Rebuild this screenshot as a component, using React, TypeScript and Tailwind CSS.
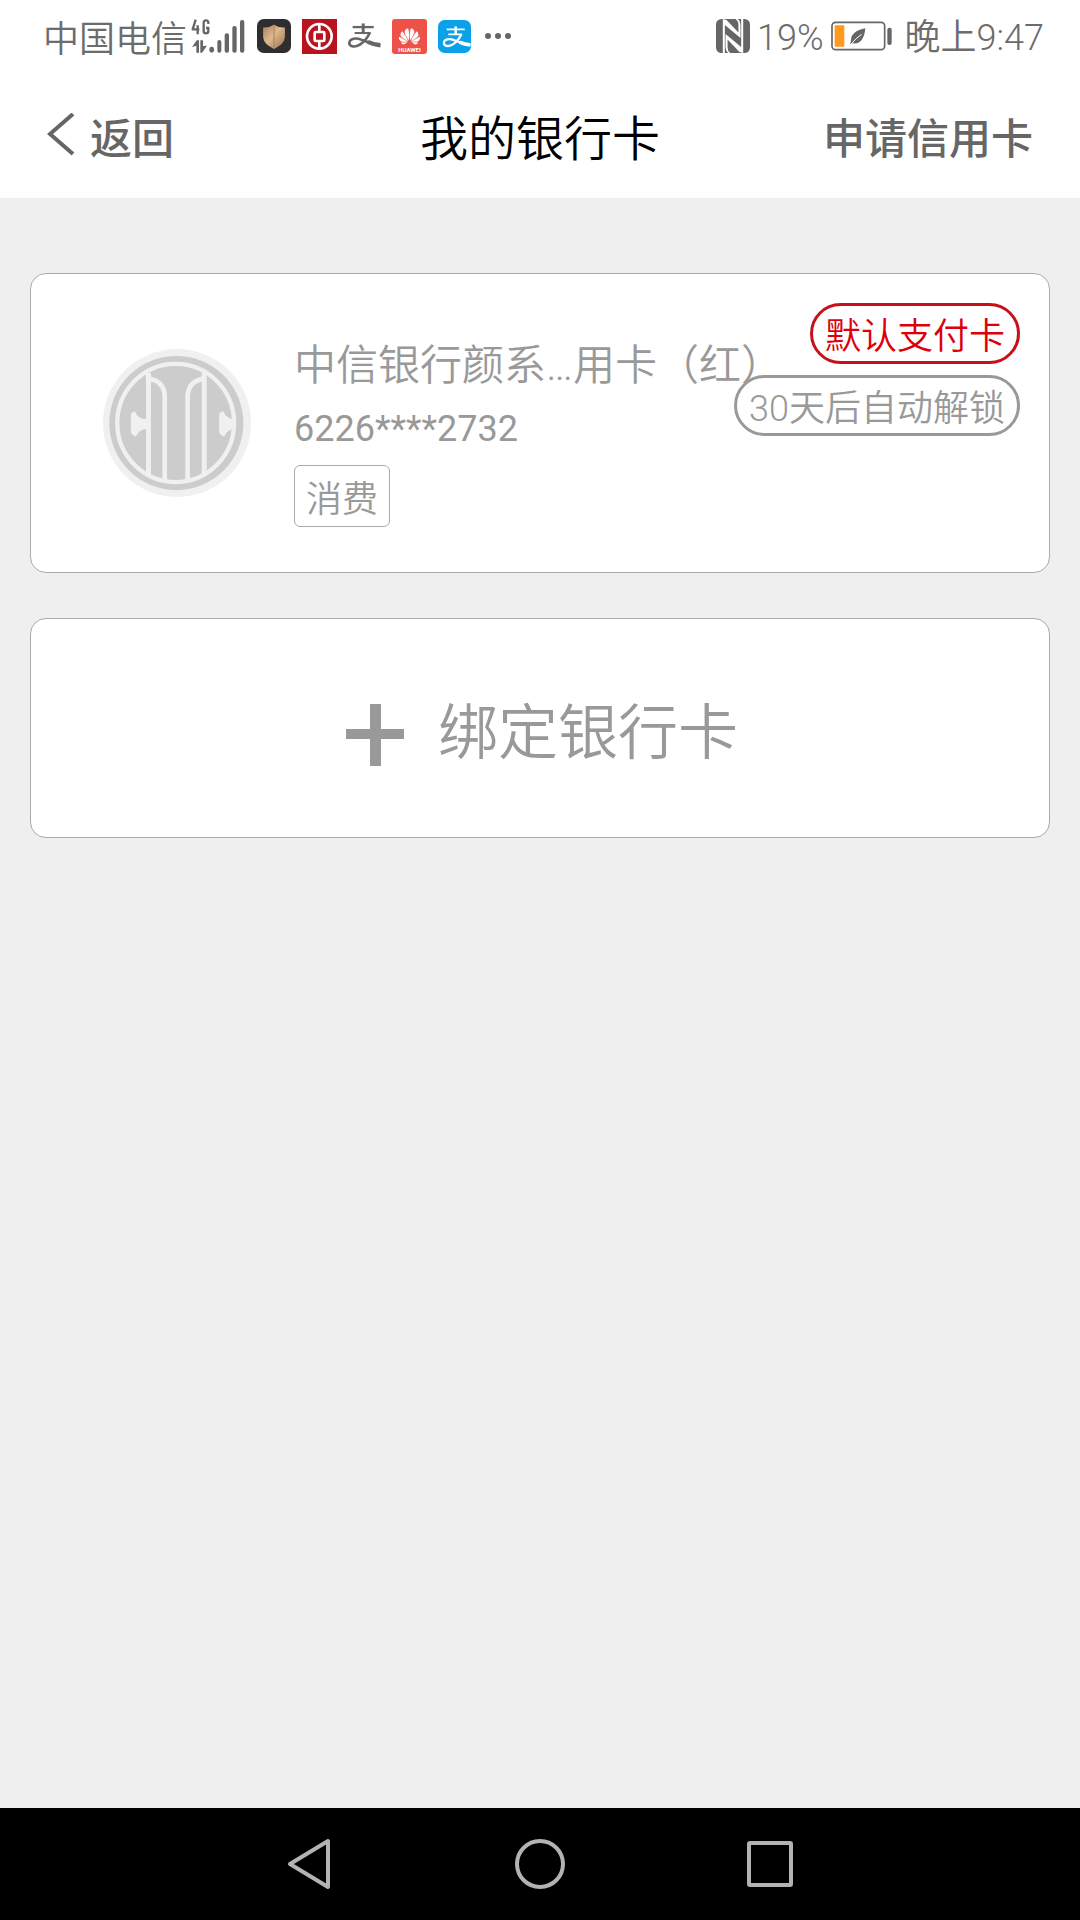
import React from "react";
import { SiHuawei } from "react-icons/si";

function SignalIcon() {
  return (
    <svg className="h-[36px] w-[54px]" viewBox="0 0 162 108" fill="#666">
      <g fill="none" stroke="#666" strokeWidth="7" strokeLinejoin="round">
        <path d="M14 5 5 34H25M20 22V49" />
        <path d="M52 18V14Q52 7 45 7T38 14V39Q38 46 45 46T52 39V30H45" />
      </g>
      <path d="M3 88 17 67H24V104H16V83ZM28 67H36V84L48 83 33 104H28Z" />
      <rect x="55" y="86" width="14" height="18" rx="7" />
      <rect x="79" y="66" width="12" height="38" rx="6" />
      <rect x="101" y="46" width="13" height="58" rx="6" />
      <rect x="124" y="24" width="13" height="80" rx="6" />
      <rect x="147" y="6" width="13" height="98" rx="6" />
    </svg>
  );
}

function ShieldIcon() {
  return (
    <svg className="size-[34px]" viewBox="0 0 100 100">
      <defs>
        <linearGradient id="bronze" x1="0" y1="0" x2="1" y2="1">
          <stop offset="0" stopColor="#a87f5b" />
          <stop offset=".45" stopColor="#deb88e" />
          <stop offset="1" stopColor="#98714f" />
        </linearGradient>
      </defs>
      <rect width="100" height="100" rx="20" fill="#302d31" />
      <path d="M50 17Q66 27 82 25V54Q80 75 50 88 20 75 18 54V25Q34 27 50 17Z" fill="url(#bronze)" />
      <path d="M50 17V88" stroke="#a98360" strokeWidth="3" />
    </svg>
  );
}

function BankOfChinaIcon() {
  return (
    <svg className="size-[35px]" viewBox="0 0 105 105" fill="none" stroke="#fff">
      <rect width="105" height="105" fill="#b9131f" stroke="none" />
      <circle cx="52" cy="52" r="37" strokeWidth="8" />
      <rect x="38" y="39" width="29" height="27" rx="3" strokeWidth="8" />
      <path d="M52 15V37M52 68V90" strokeWidth="8" />
    </svg>
  );
}

function ZhiGlyph() {
  return (
    <g fill="none" stroke="currentColor" strokeLinecap="butt">
      <path d="M14 11H78" strokeWidth="7" />
      <path d="M46 0V30" strokeWidth="9" />
      <path d="M20 29H69" strokeWidth="6" />
      <path d="M66 28Q55 52 36 64C18 75 3 69 4 58 6 45 24 43 40 49 58 55 74 64 98 67" strokeWidth="8" />
      <path d="M60 56Q76 64 98 66" strokeWidth="13" />
    </g>
  );
}

function AlipayGlyphIcon() {
  return (
    <svg className="h-[26px] w-[33px] text-[#666]" viewBox="0 0 100 76">
      <ZhiGlyph />
    </svg>
  );
}

function HuaweiIcon() {
  return (
    <span className="flex size-[35px] flex-col items-center rounded-[3px] bg-[#ed5248] pt-[7px] text-white">
      <SiHuawei className="size-[21px]" />
      <span className="font-['Roboto'] text-[6px] leading-[6px] font-bold">HUAWEI</span>
    </span>
  );
}

function AlipayAppIcon() {
  return (
    <svg className="size-[33px] text-white" viewBox="0 0 100 100">
      <rect width="100" height="100" rx="20" fill="#0aa1e8" />
      <svg x="14" y="19" width="86" height="65" viewBox="0 0 100 76">
        <ZhiGlyph />
      </svg>
    </svg>
  );
}

function DotsIcon() {
  return (
    <svg className="h-[6px] w-[26px]" viewBox="0 0 26 6" fill="#666">
      <circle cx="3" cy="3" r="3" />
      <circle cx="13" cy="3" r="3" />
      <circle cx="23" cy="3" r="3" />
    </svg>
  );
}

function NfcIcon() {
  return (
    <svg className="size-[34px]" viewBox="0 0 100 100">
      <rect width="100" height="100" rx="16" fill="#666" />
      <path
        d="M20 0 31 3 66 40V18Q66 6 58 0H64Q72 6 72 20V56L26 18V100H20Z M80 100 69 97 34 60V82Q34 94 42 100H36Q28 94 28 80V44L74 82V0H80Z"
        fill="#fff"
      />
    </svg>
  );
}

function BatteryIcon() {
  return (
    <svg className="h-[30px] w-[62px]" viewBox="0 0 186 90">
      <rect x="3" y="4" width="158" height="82" rx="11" fill="none" stroke="#666" strokeWidth="5" />
      <rect x="11" y="13" width="29" height="64" rx="3" fill="#ff9a1f" />
      <path d="M103 22Q62 30 60 56L58 70 65 67Q98 72 103 22Z" fill="#666" />
      <path d="M60 70Q72 53 92 40" stroke="#fff" strokeWidth="3" fill="none" />
      <rect x="169" y="20" width="13" height="52" rx="6" fill="#666" />
    </svg>
  );
}

function CiticLogo() {
  return (
    <svg className="size-[148px] shrink-0" viewBox="40 40 446 446">
      <circle cx="263" cy="263" r="223" fill="#f0f0f0" />
      <circle cx="261" cy="263" r="202" fill="#ccc" />
      <g fill="none" stroke="#f0f0f0">
        <ellipse cx="259" cy="263" rx="176" ry="178" strokeWidth="13" />
        <path d="M177 112V418M345 112V418" strokeWidth="15" />
        <path d="M183 130Q226 140 226 185V438M339 130Q295 140 295 185V438" strokeWidth="14" />
      </g>
      <path d="M124 240Q124 228 137 228 143 250 172 252V280Q148 282 139 304 127 300 124 290ZM390 240Q390 228 403 228 411 250 438 252V280Q414 282 405 304 393 300 390 290Z" fill="#f0f0f0" />
    </svg>
  );
}

function Latin({ children }: { children: React.ReactNode }) {
  return <span className="font-['Roboto',sans-serif] leading-none">{children}</span>;
}

function StatusBar() {
  return (
    <div className="flex h-[72px] items-center justify-between pr-[36px] pl-[43px] text-[36px] leading-none font-[350] text-[#6c6c6c]">
      <div className="flex items-center">
        <span>中国电信</span>
        <span className="mr-[12px] ml-[4px]">
          <SignalIcon />
        </span>
        <div className="flex items-center gap-[11px]">
          <ShieldIcon />
          <BankOfChinaIcon />
          <AlipayGlyphIcon />
          <HuaweiIcon />
          <AlipayAppIcon />
        </div>
        <span className="ml-[14px]">
          <DotsIcon />
        </span>
      </div>
      <div className="flex items-center gap-[7px]">
        <NfcIcon />
        <span>
          <Latin>19%</Latin>
        </span>
        <BatteryIcon />
        <span className="ml-[5px]">
          晚上<Latin>9:47</Latin>
        </span>
      </div>
    </div>
  );
}

function Header() {
  return (
    <header className="grid h-[126px] grid-cols-[1fr_auto_1fr] items-center px-[47px] text-[#666]">
      <button type="button" className="flex items-center gap-[15px] text-[42px] font-medium">
        <svg className="h-[44px] w-[28px]" viewBox="0 0 28 44" fill="none" stroke="currentColor" strokeWidth="4">
          <path d="M26 1 3 21 26 41" />
        </svg>
        返回
      </button>
      <h1 className="text-[48px] font-[350] text-black">我的银行卡</h1>
      <a href="#apply" className="justify-self-end text-[42px] font-medium">
        申请信用卡
      </a>
    </header>
  );
}

function BankCard() {
  return (
    <article className="relative flex h-[300px] items-center rounded-2xl border border-[#aaa] bg-white pl-[72px] font-[350] text-[#999]">
      <CiticLogo />
      <div className="ml-[43px] flex flex-col items-start pt-3">
        <h2 className="text-[42px] leading-[62px]">
          中信银行颜系<Latin>…</Latin>用卡（红）
        </h2>
        <p className="font-['Roboto',sans-serif] text-[36px] leading-[72px] font-normal">6226****2732</p>
        <span className="rounded-md border border-[#aaa] px-[11px] text-[36px] leading-[60px]">消费</span>
      </div>
      <div className="absolute top-[29px] right-[29px] flex flex-col items-end gap-[11px] text-[36px] leading-[55px]">
        <span className="rounded-full border-3 border-[#c8101a] px-[12px] text-[#dc0008]">默认支付卡</span>
        <span className="rounded-full border-3 border-[#999] px-[12px]">
          <Latin>30</Latin>天后自动解锁
        </span>
      </div>
    </article>
  );
}

function BindCardButton() {
  return (
    <button
      type="button"
      className="flex h-[220px] w-full items-center justify-center gap-[34px] rounded-2xl border border-[#aaa] bg-white pl-1 text-[60px] font-[350] text-[#999]"
    >
      <svg className="mt-[14px] h-[62px] w-[58px]" viewBox="0 0 58 62" fill="currentColor">
        <path d="M24 0H35V25H58V35H35V62H24V35H0V25H24Z" />
      </svg>
      绑定银行卡
    </button>
  );
}

function NavBar() {
  return (
    <nav className="flex h-[112px] justify-center bg-black">
      <button type="button" aria-label="返回上一页" className="grid w-[230px] place-items-center">
        <svg className="h-[52px] w-[46px]" viewBox="0 0 46 52" fill="none" stroke="#b3b3b3" strokeWidth="4" strokeLinejoin="round">
          <path d="M41 3V49L3 26Z" />
        </svg>
      </button>
      <button type="button" aria-label="主页" className="grid w-[230px] place-items-center">
        <span className="size-[50px] rounded-full border-4 border-[#b3b3b3]" />
      </button>
      <button type="button" aria-label="最近任务" className="grid w-[230px] place-items-center">
        <span className="size-[46px] rounded-[3px] border-4 border-[#b3b3b3]" />
      </button>
    </nav>
  );
}

export default function App() {
  return (
    <div className="flex min-h-screen flex-col bg-[#efefef] font-['Noto_Sans_CJK_SC',sans-serif]">
      <div className="bg-white">
        <StatusBar />
        <Header />
      </div>
      <main className="flex flex-1 flex-col gap-[45px] px-[30px] pt-[75px]">
        <BankCard />
        <BindCardButton />
      </main>
      <NavBar />
    </div>
  );
}
